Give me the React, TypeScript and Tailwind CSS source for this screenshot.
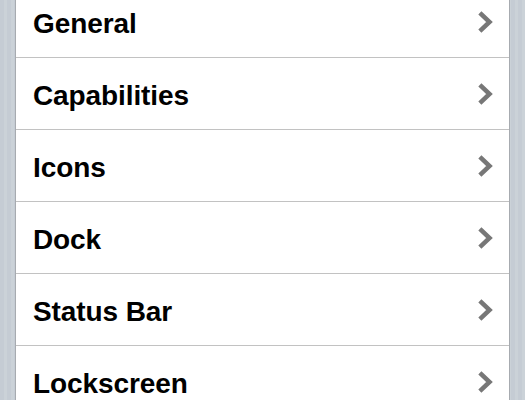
import React from 'react';

const items = ['General', 'Capabilities', 'Icons', 'Dock', 'Status Bar', 'Lockscreen', 'Notifications'];

const Chevron = () => (
  <svg width="16" height="22" viewBox="0 0 16 22" className="shrink-0">
    <polyline points="3.5,3.5 11.5,11 3.5,18.5" fill="none" stroke="#777777" strokeWidth="4.5" strokeLinecap="square" strokeLinejoin="miter" />
  </svg>
);

export default function App() {
  return (
    <div className="h-[400px] w-full overflow-hidden bg-[repeating-linear-gradient(90deg,#c5ccd4_0px,#c5ccd4_4px,#cbd2d8_4px,#cbd2d8_7px)] px-[15px]">
      <div className="-mt-[14px] border-x border-[#a7abb0] bg-white">
        {items.map((label) => (
          <div
            key={label}
            className="flex h-[72px] items-center justify-between border-b border-[#c2c2c2] pl-[17px] pr-[15px]"
          >
            <span className="pt-[5px] text-[28px] font-bold leading-none tracking-[-0.1px] text-black [font-family:'Liberation_Sans',Arial,sans-serif]">
              {label}
            </span>
            <Chevron />
          </div>
        ))}
      </div>
    </div>
  );
}
